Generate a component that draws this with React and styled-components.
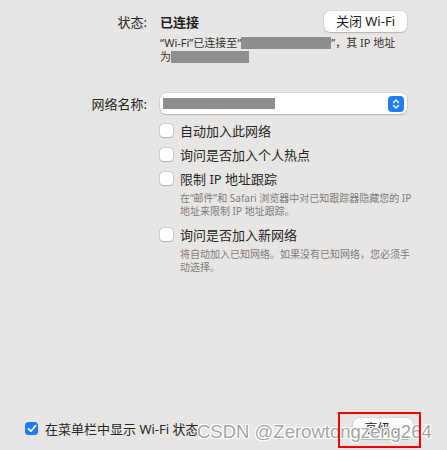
import React from 'react'
import styled, { createGlobalStyle } from 'styled-components'

const GlobalStyle = createGlobalStyle`
  html, body {
    margin: 0;
    padding: 0;
    background: #e8e6e4;
  }
  body {
    font-family: "Noto Sans", "Noto Sans CJK SC", sans-serif;
    color: #262626;
  }
`

function App() {
    return (
        <Window>
            <GlobalStyle />
            <FormRow>
                <Label>状态:</Label>
                <StatusLine>
                    <Strong>已连接</Strong>
                    <PillButton>关闭 Wi-Fi</PillButton>
                </StatusLine>
            </FormRow>
            <FormRow>
                <span />
                <Info>
                    “Wi-Fi”已连接至“<Redact w={90} />”，其 IP 地址<br />
                    为<Redact w={78} />
                </Info>
            </FormRow>

            <FormRow top={29}>
                <Label>网络名称:</Label>
                <Select>
                    <Redact w={112} h={11} />
                    <Stepper>
                        <svg width="8" height="12" viewBox="0 0 8 12">
                            <path d="M1.5 4.5 L4 2 L6.5 4.5 M1.5 7.5 L4 10 L6.5 7.5" fill="none" stroke="#fff" strokeWidth="1.4" strokeLinecap="round" strokeLinejoin="round" />
                        </svg>
                    </Stepper>
                </Select>
            </FormRow>

            <FormRow top={4}>
                <span />
                <Options>
                    <Option>
                        <Box />
                        <span>自动加入此网络</span>
                    </Option>
                    <Option>
                        <Box />
                        <span>询问是否加入个人热点</span>
                    </Option>
                    <Option>
                        <Box />
                        <span>限制 IP 地址跟踪</span>
                    </Option>
                    <Hint>在“邮件”和 Safari 浏览器中对已知跟踪器隐藏您的 IP 地址来限制 IP 地址跟踪。</Hint>
                    <Option>
                        <Box />
                        <span>询问是否加入新网络</span>
                    </Option>
                    <Hint>将自动加入已知网络。如果没有已知网络，您必须手动选择。</Hint>
                </Options>
            </FormRow>

            <Footer>
                <FooterCheck>
                    <Box checked>
                        <svg width="10" height="9" viewBox="0 0 10 9">
                            <path d="M1.5 4.8 L4 7.2 L8.6 1.6" fill="none" stroke="#fff" strokeWidth="1.8" strokeLinecap="round" strokeLinejoin="round" />
                        </svg>
                    </Box>
                    <span>在菜单栏中显示 Wi-Fi 状态</span>
                </FooterCheck>
                <PillButton>高级...</PillButton>
                <Watermark>CSDN @Zerowtongzeng264</Watermark>
                <Highlight />
            </Footer>
        </Window>
    )
}

export default App


const Window = styled.div`
    position: relative;
    width: 447px;
    height: 450px;
    box-sizing: border-box;
    padding-top: 11px;
    display: flex;
    flex-direction: column;
    overflow: hidden;
`

const FormRow = styled.div`
    display: grid;
    grid-template-columns: 147px 247px;
    column-gap: 13px;
    align-items: center;
    margin-top: ${p => p.top || 0}px;
`

const Label = styled.div`
    text-align: right;
    font-size: 13px;
    color: #262626;
`

const StatusLine = styled.div`
    display: flex;
    align-items: center;
    justify-content: space-between;
`

const Strong = styled.span`
    font-size: 13px;
    font-weight: 700;
    color: #1e1e1e;
`

const PillButton = styled.button`
    height: 21px;
    padding: 0 12px;
    border: none;
    border-radius: 6px;
    background: #fff;
    box-shadow: 0 0 0 0.5px rgba(0,0,0,0.12), 0 1px 1.5px rgba(0,0,0,0.18);
    font-family: inherit;
    font-size: 13px;
    color: #222;
    line-height: 21px;
`

const Info = styled.div`
    margin-top: 4px;
    font-size: 11px;
    line-height: 14px;
    color: #333;
    white-space: nowrap;
`

const Redact = styled.span`
    display: inline-block;
    width: ${p => p.w}px;
    height: ${p => p.h || 12}px;
    background: #8e8e8e;
    vertical-align: -2px;
`

const Select = styled.div`
    height: 21px;
    box-sizing: border-box;
    padding: 0 3px 0 3px;
    display: flex;
    align-items: center;
    justify-content: space-between;
    background: #fff;
    border-radius: 6px;
    box-shadow: 0 0 0 0.5px rgba(0,0,0,0.12), 0 1px 1.5px rgba(0,0,0,0.18);
`

const Stepper = styled.div`
    width: 16px;
    height: 16px;
    border-radius: 4px;
    background: #1f7cf6;
    display: flex;
    align-items: center;
    justify-content: center;
`

const Options = styled.div`
    display: flex;
    flex-direction: column;
`

const Option = styled.label`
    height: 24px;
    display: flex;
    align-items: center;
    gap: 7px;
    font-size: 13px;
    color: #262626;
`

const Box = styled.span`
    width: 13px;
    height: 13px;
    flex: none;
    box-sizing: border-box;
    border-radius: 3.5px;
    background: ${p => p.checked ? '#1f7cf6' : '#fff'};
    box-shadow: ${p => p.checked ? 'none' : '0 0 0 0.5px rgba(0,0,0,0.2), 0 0.5px 1px rgba(0,0,0,0.15)'};
    display: flex;
    align-items: center;
    justify-content: center;
`

const Hint = styled.div`
    margin-right: -9px;
    padding: 2px 0 4px 20px;
    font-size: 10px;
    line-height: 13px;
    color: #7d7d7d;
`

const Footer = styled.div`
    position: relative;
    margin-top: auto;
    padding: 0 34px 11px 25px;
    display: flex;
    align-items: center;
    justify-content: space-between;
`

const FooterCheck = styled.label`
    display: flex;
    align-items: center;
    gap: 7px;
    font-size: 13px;
    color: #262626;
`

const Watermark = styled.div`
    position: absolute;
    left: 197px;
    bottom: 7px;
    font-family: "Liberation Sans", Arial, sans-serif;
    font-size: 18.5px;
    color: rgba(140,140,140,0.8);
    text-shadow: 1px 1px 0 #fff, -1px -1px 0 #fff, 1px -1px 0 #fff, -1px 1px 0 #fff;
    white-space: nowrap;
    pointer-events: none;
`

const Highlight = styled.div`
    position: absolute;
    left: 338px;
    bottom: 2px;
    width: 83px;
    height: 36px;
    box-sizing: border-box;
    border: 2px solid #f00000;
`
